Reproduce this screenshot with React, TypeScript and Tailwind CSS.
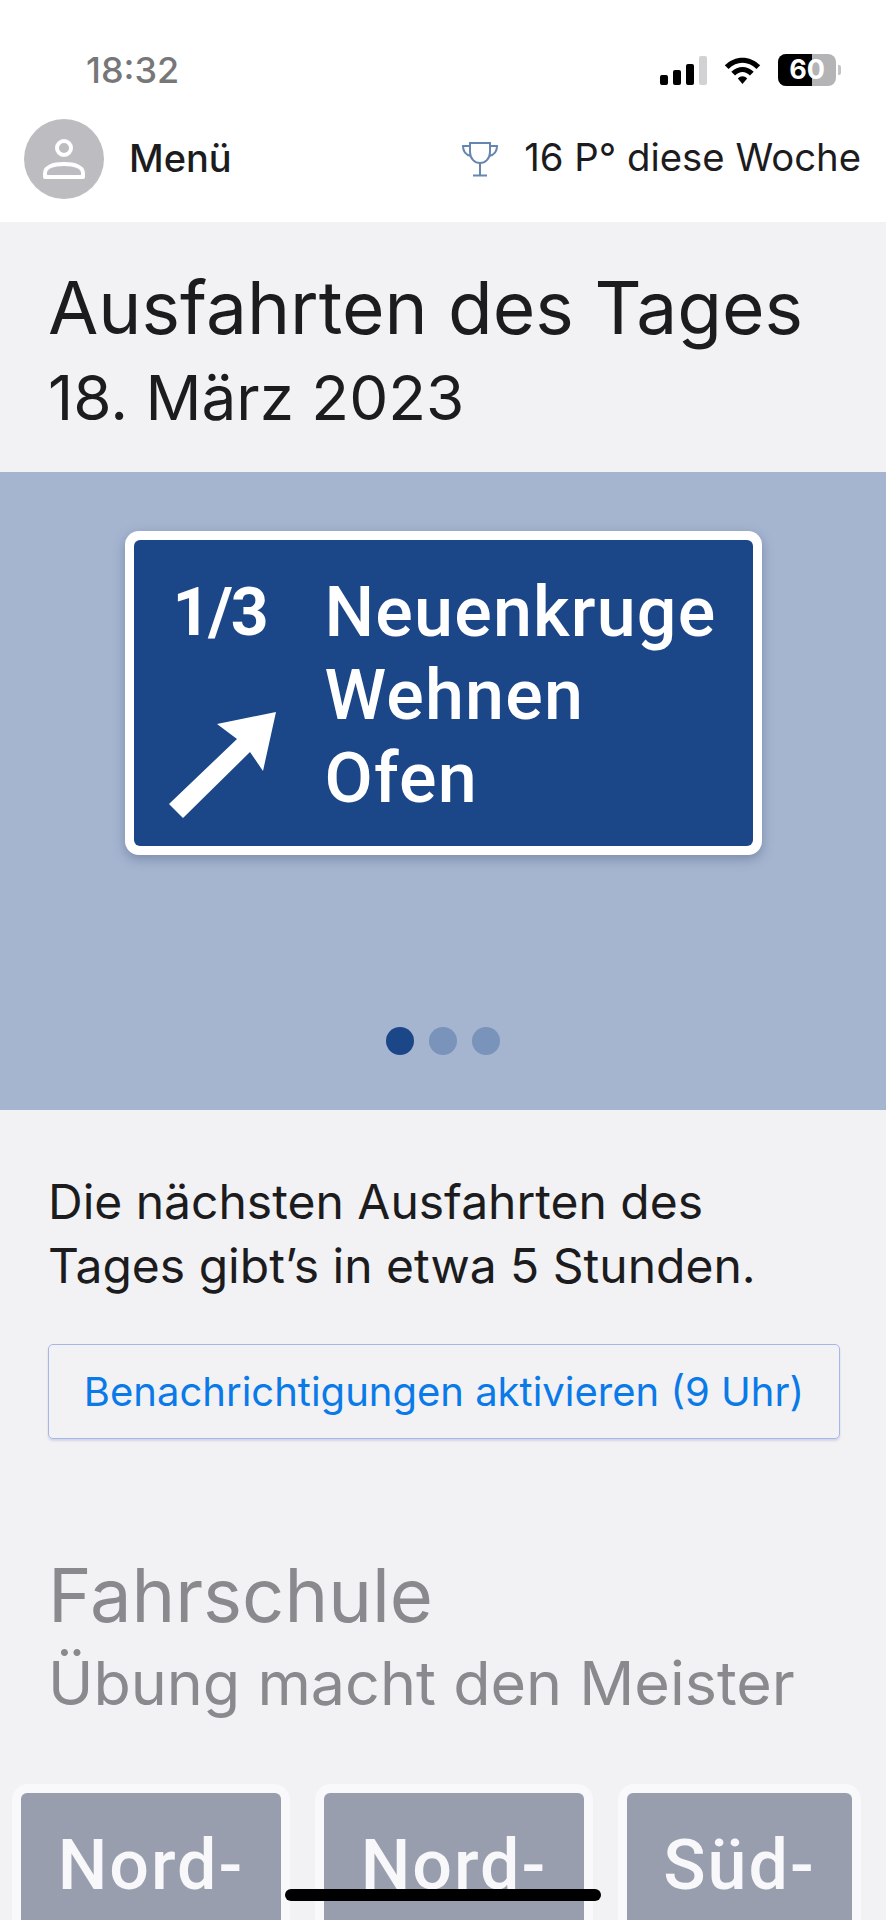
const ui = "font-['Inter',sans-serif]";
const din = "font-['Roboto',sans-serif]";

function StatusBar() {
    return (
        <div className="flex h-[100px] items-start justify-between pt-[48px] pl-[86px] pr-[45px]">
            <span className="text-[36px] leading-[44px] font-medium text-[#77777a]">18:32</span>
            <div className="flex items-center gap-[16px] pt-[6px]">
                <div className="flex items-end gap-[5px]">
                    <span className="h-[10px] w-[8px] rounded-[2px] bg-black" />
                    <span className="h-[15px] w-[8px] rounded-[2px] bg-black" />
                    <span className="h-[21px] w-[8px] rounded-[2px] bg-black" />
                    <span className="h-[29px] w-[8px] rounded-[2px] bg-[#d2d2d4]" />
                </div>
                <svg width="39" height="28" viewBox="0 0 40 30">
                    <path d="M1 10 C12 -1 28 -1 39 10 L35 14 C26 5 14 5 5 14 Z" fill="#000" />
                    <path d="M8 17 C15 10 25 10 32 17 L28 21 C23 16 17 16 12 21 Z" fill="#000" />
                    <path d="M15 24 C18 21 22 21 25 24 L20 30 Z" fill="#000" />
                </svg>
                <div className="flex items-center gap-[2px]">
                    <div className="relative h-[32px] w-[58px] overflow-hidden rounded-[8px] bg-[#b4b4b6]">
                        <div className="h-full w-[34px] bg-black" />
                        <span className="absolute inset-0 flex items-center justify-center text-[27px] font-bold text-white">60</span>
                    </div>
                    <span className="h-[10px] w-[3px] rounded-r-[2px] bg-[#c4c4c6]" />
                </div>
            </div>
        </div>
    );
}

function TopBar() {
    return (
        <div className="flex h-[122px] items-start justify-between pl-[24px] pr-[25px] pt-[19px]">
            <div className="flex items-center gap-[25px]">
                <div className="flex h-[80px] w-[80px] items-center justify-center rounded-full bg-[#bdbdc1]">
                    <svg width="42" height="40" viewBox="0 0 42 40" fill="none" stroke="#fff" strokeWidth="4">
                        <circle cx="21" cy="9" r="7" />
                        <path d="M2 38 L2 34 C2 28 10 25 21 25 C32 25 40 28 40 34 L40 38 Z" strokeLinejoin="round" />
                    </svg>
                </div>
                <span className="-mt-[2px] text-[38px] font-medium text-[#1c1c1e]">Menü</span>
            </div>
            <div className="flex h-[80px] items-center gap-[26px]">
                <svg width="36" height="35" viewBox="0 0 36 35" fill="none" stroke="#6586b0" strokeWidth="2">
                    <path d="M8 1 H28 V10 C28 17 23 21 18 21 C13 21 8 17 8 10 Z" />
                    <path d="M8 4 H1 C1 10 4 13 9 14" />
                    <path d="M28 4 H35 C35 10 32 13 27 14" />
                    <path d="M18 21 V33" />
                    <path d="M11 33.5 H25" />
                </svg>
                <span className="-mt-[2px] text-[38.3px] text-[#1c1c1e]">16 P° diese Woche</span>
            </div>
        </div>
    );
}

function ExitSign() {
    return (
        <div className="h-[324px] w-[637px] rounded-[14px] bg-white p-[9px] shadow-[0_4px_12px_rgba(40,60,100,0.35)]">
            <div className={`flex h-full rounded-[6px] bg-[#1b4788] pl-[35px] pt-[31px] text-white ${din}`}>
                <div className="flex w-[156px] flex-col">
                    <span className="ml-[4px] text-[66px] leading-[83px] font-bold tracking-[-2px]">1/3</span>
                    <svg width="107" height="106" viewBox="0 0 107 106" className="mt-[58px]">
                        <path d="M0 92 L68 27 L48 12 L107 0 L94 59 L81 40 L14 106 Z" fill="#fff" />
                    </svg>
                </div>
                <div className="flex flex-col text-[70px] leading-[83px] font-medium tracking-[1.2px]">
                    <span>Neuenkruge</span>
                    <span>Wehnen</span>
                    <span>Ofen</span>
                </div>
            </div>
        </div>
    );
}

function Carousel() {
    return (
        <div className="flex h-[638px] flex-col items-center bg-[#a5b5d0] pt-[59px]">
            <ExitSign />
            <div className="mt-[172px] flex gap-[15px]">
                <span className="h-[28px] w-[28px] rounded-full bg-[#1b4788]" />
                <span className="h-[28px] w-[28px] rounded-full bg-[#7a93bb]" />
                <span className="h-[28px] w-[28px] rounded-full bg-[#7a93bb]" />
            </div>
        </div>
    );
}

const regions = [
    { name: 'Nord-', outer: 'w-[278px]' },
    { name: 'Nord-', outer: 'w-[278px]' },
    { name: 'Süd-', outer: 'w-[243px]' },
];

export default function App() {
    return (
        <main className={`relative h-[1920px] w-[886px] overflow-hidden bg-[#f2f2f5] ${ui}`}>
            <header className="bg-white">
                <StatusBar />
                <TopBar />
            </header>
            <section className="h-[250px] px-[48px] pt-[44px] text-[#1c1c1e]">
                <h1 className="text-[73px] leading-[84px]">Ausfahrten des Tages</h1>
                <p className="text-[62px] leading-[96px]">18. März 2023</p>
            </section>
            <Carousel />
            <section className="px-[48px] pt-[60px]">
                <p className="text-[48px] leading-[64px] text-[#1c1c1e]">
                    Die nächsten Ausfahrten des
                    <br />
                    Tages gibt’s in etwa 5 Stunden.
                </p>
                <button className="mt-[46px] flex h-[95px] w-[792px] items-center justify-center rounded-[5px] border border-[#a7b6ea] text-[40px] text-[#0a7ae8] shadow-[0_2px_2px_rgba(120,130,190,0.25)]">
                    Benachrichtigungen aktivieren (9 Uhr)
                </button>
            </section>
            <section className="px-[48px] pt-[110px] text-[#8a8a8e]">
                <h2 className="text-[74px] leading-[92px]">Fahrschule</h2>
                <p className="text-[61px] leading-[84px]">Übung macht den Meister</p>
            </section>
            <div className="mt-[59px] flex gap-[25px] pl-[12px]">
                {regions.map((region, i) => (
                    <div key={i} className={`${region.outer} h-[200px] rounded-[16px] bg-[#f9f9fb] p-[9px]`}>
                        <div className={`h-full rounded-[6px] bg-[#989ead] pt-[31px] text-center text-[70px] leading-[83px] font-medium tracking-[2px] text-[#f8f8fb] ${din}`}>
                            {region.name}
                        </div>
                    </div>
                ))}
            </div>
            <div className="absolute left-[285px] top-[1889px] h-[12px] w-[316px] rounded-full bg-black" />
        </main>
    );
}
